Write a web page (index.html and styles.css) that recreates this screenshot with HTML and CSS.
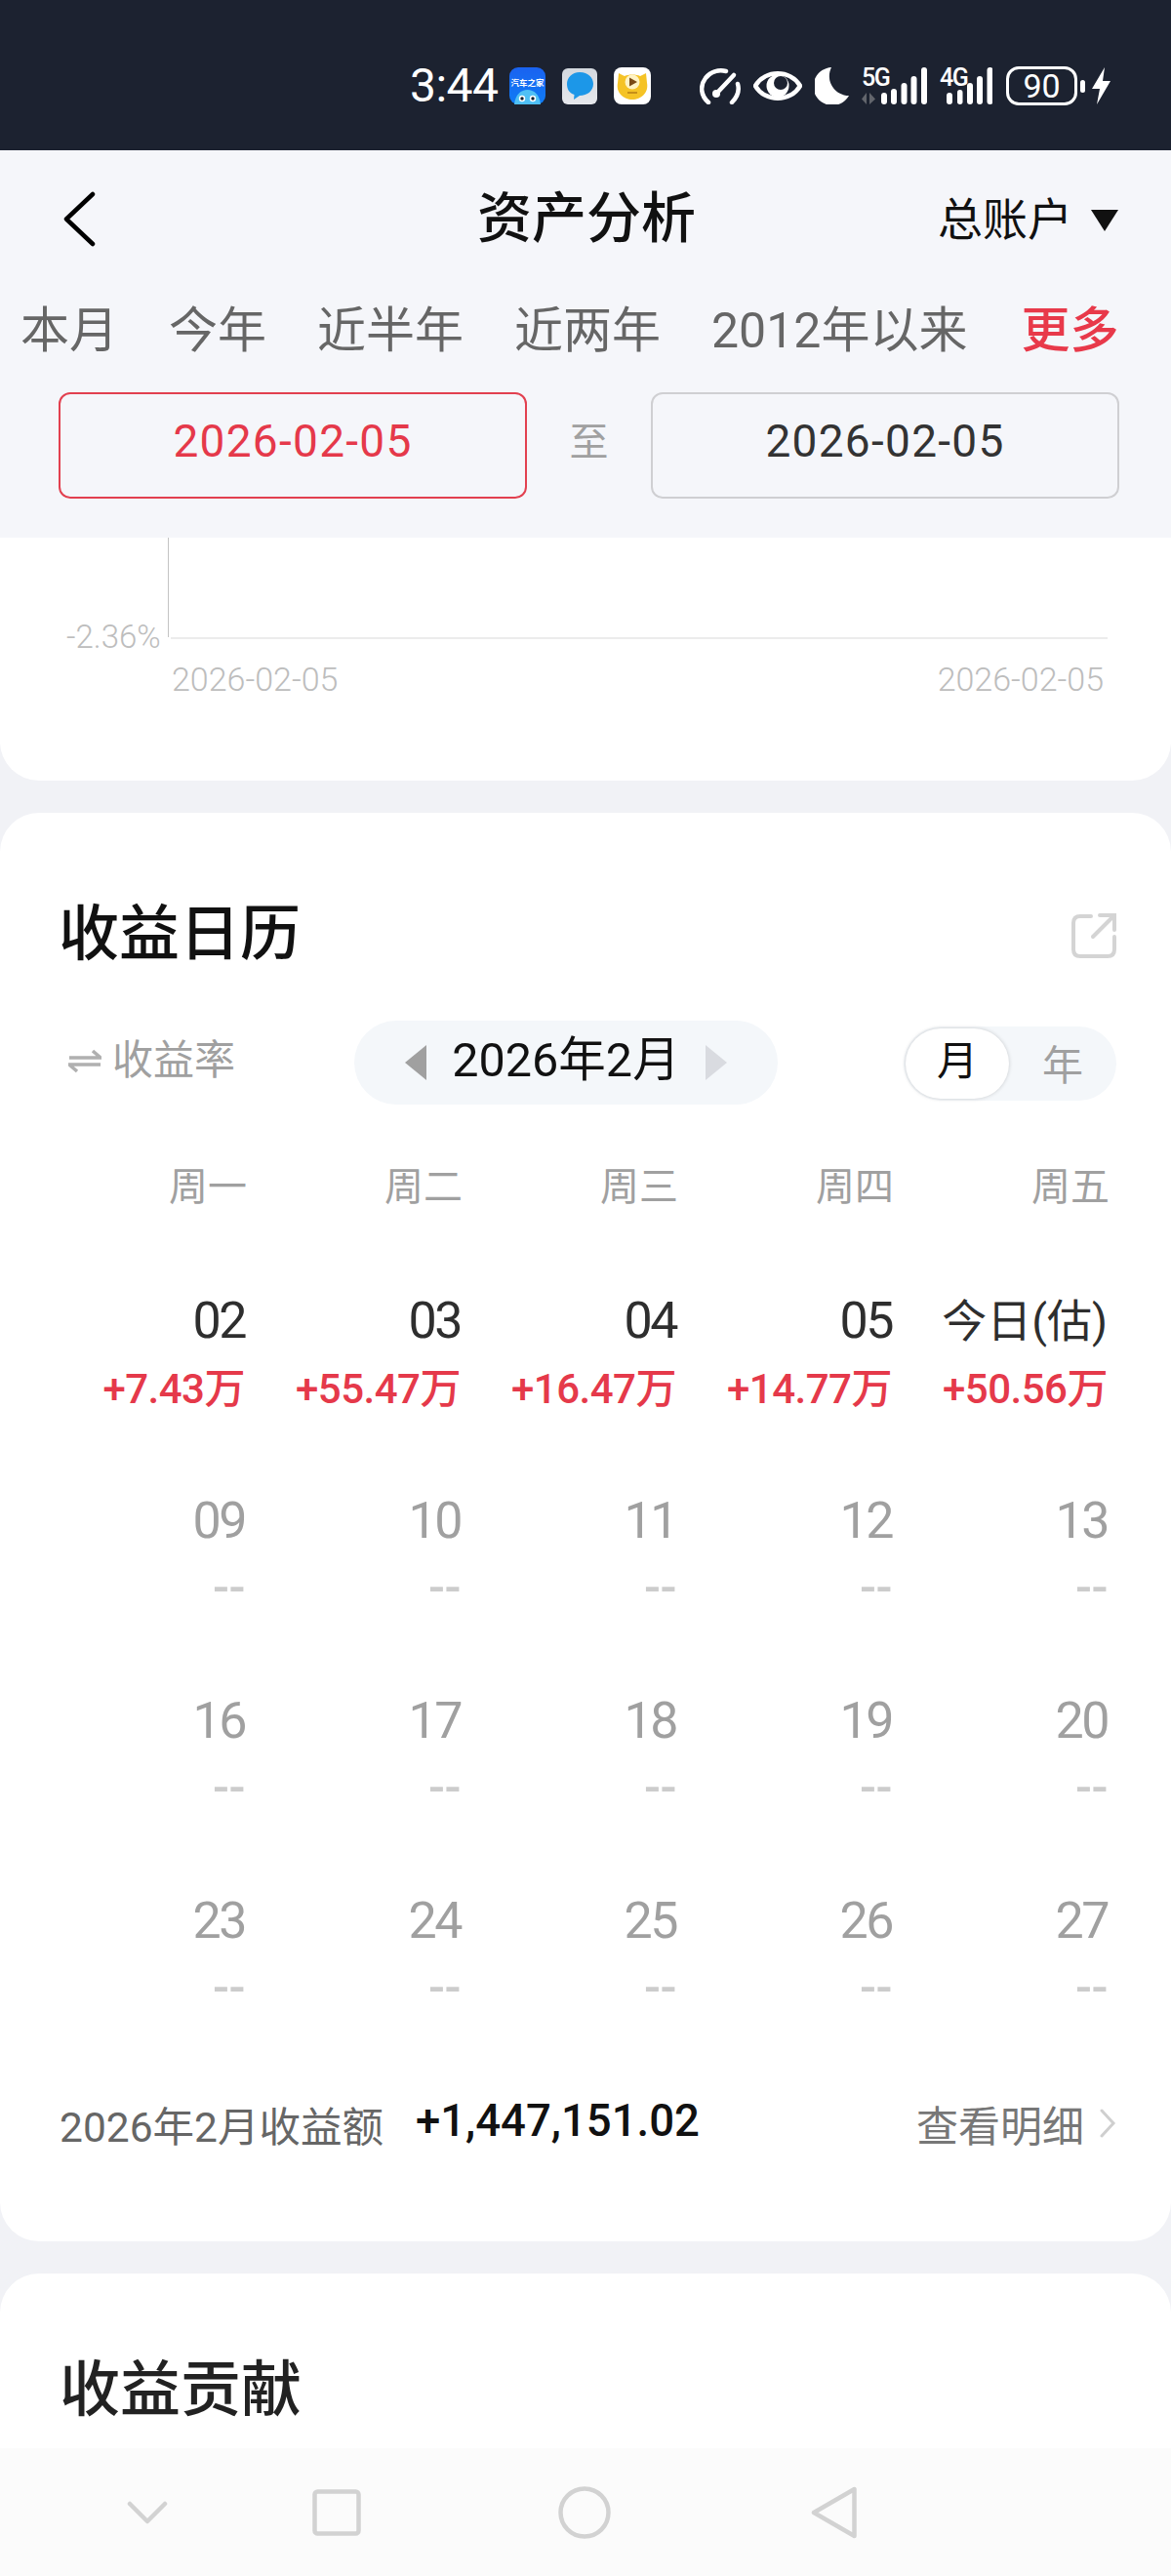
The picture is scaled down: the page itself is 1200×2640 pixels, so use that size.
FILE: index.html
```html
<!DOCTYPE html>
<html lang="zh-CN">
<head>
<meta charset="utf-8">
<title>资产分析</title>
<link rel="stylesheet" href="styles.css">
</head>
<body>
<div class="phone">
  <div class="statusbar">
    <span class="time">3:44</span>
    <div class="apps">
      <svg class="app" width="37" height="38" viewBox="0 0 37 38">
        <defs><linearGradient id="ah" x1="0" y1="0" x2="0" y2="1"><stop offset="0" stop-color="#1a62f0"/><stop offset="1" stop-color="#0f7cf5"/></linearGradient></defs>
        <rect width="37" height="38" rx="9" fill="url(#ah)"/>
        <text class="app-label" x="18.5" y="19" text-anchor="middle">汽车之家</text>
        <path d="M5 38 C6 28 12 23 18.500 23 C25 23 31 28 32 38Z" fill="#4fc0f5"/>
        <circle cx="13" cy="32" r="3.200" fill="#fff"/><circle cx="24" cy="32" r="3.200" fill="#fff"/>
        <circle cx="13" cy="32" r="1.700" fill="#123"/><circle cx="24" cy="32" r="1.700" fill="#123"/>
      </svg>
      <svg class="app" width="36" height="37" viewBox="0 0 36 37">
        <defs><linearGradient id="mg" x1="0" y1="0" x2="0" y2="1"><stop offset="0" stop-color="#d3d8de"/><stop offset="1" stop-color="#e6e8ec"/></linearGradient></defs>
        <rect width="36" height="37" rx="6" fill="url(#mg)"/>
        <path d="M18 4 C27 4 32 10 32 16 C32 23 26 28 18 28 L12 32 L12.500 27 C7 25 5 21 5 16 C5 10 10 4 18 4Z" fill="#1c97e8"/>
      </svg>
      <svg class="app" width="38" height="38" viewBox="0 0 38 38">
        <rect width="38" height="38" rx="8" fill="#fff"/>
        <path d="M5 6 L11 9 C15 7 23 7 27 9 L33 6 L34 16 C36 26 28 33 19 33 C10 33 2 26 4 16Z" fill="#f5c326"/>
        <circle cx="19" cy="15" r="7.500" fill="#fff3c4"/>
        <path d="M16 10.500 L24 15 L16 19.500Z" fill="#7a4a16"/>
        <path d="M14 26 L24 26" stroke="#b57e14" stroke-width="1.500"/>
      </svg>
    </div>
    <div class="sys">
      <svg width="42" height="38" viewBox="0 0 42 38" class="ic-stroke">
        <path d="M9 36 C1 29 0 19 6 11 C11 5 19 2 27 4"/>
        <path d="M39 17 C41 24 39 30 33 36"/>
        <path d="M18 26 L35 8"/>
        <circle class="ic-fill" cx="17" cy="27" r="4"/>
      </svg>
      <svg width="50" height="32" viewBox="0 0 50 32">
        <path class="ic-stroke" d="M2 16 C12 -1 38 -1 48 16 C38 33 12 33 2 16Z"/>
        <circle class="ic-fill" cx="25" cy="16" r="11.500"/>
        <circle cx="28" cy="13" r="7" fill="#1c2230"/>
      </svg>
      <svg width="35" height="38" viewBox="0 0 35 38">
        <path class="ic-fill" d="M17 0 A19.500 19.500 0 1 0 35 29 A20 20 0 0 1 17 0Z"/>
      </svg>
      <svg class="netgroup" width="67" height="50" viewBox="0 -12 67 50">
        <text class="net" x="0" y="18.500">5G</text>
        <path d="M5 26 L5 38 L0 32.500Z M8 26 L8 38 L14 32.500Z" fill="#62656c"/>
        <rect class="ic-fill" x="20" y="26" width="6" height="12" rx="3"/>
        <rect class="ic-fill" x="30" y="22" width="6" height="16" rx="3"/>
        <rect class="ic-fill" x="40.500" y="16" width="6" height="22" rx="3"/>
        <rect class="ic-fill" x="50.500" y="9" width="6" height="29" rx="3"/>
        <rect class="ic-fill" x="61" y="0" width="6" height="38" rx="3"/>
      </svg>
      <svg class="netgroup" width="54" height="50" viewBox="0 -12 54 50">
        <text class="net" x="0" y="18.500">4G</text>
        <rect class="ic-fill" x="7" y="26" width="6" height="12" rx="3"/>
        <rect class="ic-fill" x="18" y="23" width="5.500" height="15" rx="2.700"/>
        <rect class="ic-fill" x="28" y="16" width="6" height="22" rx="3"/>
        <rect class="ic-fill" x="38" y="9" width="6" height="29" rx="3"/>
        <rect class="ic-fill" x="48.500" y="0" width="6" height="38" rx="3"/>
      </svg>
      <div class="battery">
        <span class="battery-body">90</span>
        <span class="battery-tip"></span>
      </div>
      <svg class="bolt" width="19" height="38" viewBox="0 0 19 38">
        <path class="ic-fill" d="M13 0 L0 22 L8 22 L5 38 L19 14 L11 14Z"/>
      </svg>
    </div>
  </div>

  <header class="head">
    <div class="topbar">
      <svg class="back" width="34" height="57" viewBox="0 0 34 57"><path d="M30 3 L3 28.500 L30 54"/></svg>
      <h1 class="title">资产分析</h1>
      <div class="account"><span>总账户</span><i class="caret"></i></div>
    </div>
    <div class="tabs">
      <span class="tab">本月</span><span class="tab">今年</span><span class="tab">近半年</span><span class="tab">近两年</span><span class="tab">2012年以来</span><span class="tab tab-more">更多</span>
    </div>
    <div class="dates">
      <div class="datebox datebox-on">2026-02-05</div>
      <span class="to">至</span>
      <div class="datebox">2026-02-05</div>
    </div>
  </header>

  <main class="scroll">
    <section class="card card-chart">
      <div class="plot">
        <span class="ylabel">-2.36%</span>
        <span class="yaxis"></span>
        <span class="xaxis"></span>
      </div>
      <div class="xlabels"><span>2026-02-05</span><span>2026-02-05</span></div>
    </section>

    <section class="card card-cal">
      <div class="cal-title">
        <h2 class="h2">收益日历</h2>
        <svg class="share" width="46" height="46" viewBox="0 0 46 46"><path d="M20 3 L9 3 Q2 3 2 10 L2 37 Q2 44 9 44 L37 44 Q44 44 44 37 L44 24"/><path d="M22 24 L43 3"/><path d="M29 2 L44 2 L44 17"/></svg>
      </div>
      <div class="cal-controls">
        <div class="metric">
          <svg width="34" height="26" viewBox="0 0 34 26"><path d="M1 10 L33 10 L25 3"/><path d="M33 17 L1 17 L9 24"/></svg>
          <span>收益率</span>
        </div>
        <div class="month">
          <i class="tri tri-l"></i>
          <span class="month-text">2026年2月</span>
          <i class="tri tri-r"></i>
        </div>
        <div class="seg">
          <span class="seg-on">月</span>
          <span class="seg-off">年</span>
        </div>
      </div>
      <div class="cal-grid cal-week">
        <span>周一</span><span>周二</span><span>周三</span><span>周四</span><span>周五</span>
      </div>
      <div class="cal-grid cal-days">
        <div class="day"><b>02</b><em>+7.43万</em></div>
        <div class="day"><b>03</b><em>+55.47万</em></div>
        <div class="day"><b>04</b><em>+16.47万</em></div>
        <div class="day"><b>05</b><em>+14.77万</em></div>
        <div class="day"><b class="today">今日(估)</b><em>+50.56万</em></div>

        <div class="day off"><b>09</b><em>--</em></div>
        <div class="day off"><b>10</b><em>--</em></div>
        <div class="day off"><b>11</b><em>--</em></div>
        <div class="day off"><b>12</b><em>--</em></div>
        <div class="day off"><b>13</b><em>--</em></div>

        <div class="day off"><b>16</b><em>--</em></div>
        <div class="day off"><b>17</b><em>--</em></div>
        <div class="day off"><b>18</b><em>--</em></div>
        <div class="day off"><b>19</b><em>--</em></div>
        <div class="day off"><b>20</b><em>--</em></div>

        <div class="day off"><b>23</b><em>--</em></div>
        <div class="day off"><b>24</b><em>--</em></div>
        <div class="day off"><b>25</b><em>--</em></div>
        <div class="day off"><b>26</b><em>--</em></div>
        <div class="day off"><b>27</b><em>--</em></div>
      </div>
      <div class="cal-foot">
        <span class="foot-label">2026年2月收益额</span>
        <span class="foot-value">+1,447,151.02</span>
        <span class="foot-more">查看明细</span>
        <svg class="foot-chev" width="18" height="30" viewBox="0 0 18 30"><path d="M3 2 L15 15 L3 28"/></svg>
      </div>
    </section>

    <section class="card card-contrib">
      <h2 class="h2 h2-soft">收益贡献</h2>
    </section>
  </main>

  <nav class="navbar">
    <svg class="nav-chev" width="42" height="24" viewBox="0 0 42 24"><path d="M3 3 L21 21 L39 3"/></svg>
    <svg class="nav-sq" width="50" height="48" viewBox="0 0 50 48"><rect x="2.500" y="2.500" width="45" height="43" rx="3"/></svg>
    <svg class="nav-ci" width="54" height="54" viewBox="0 0 54 54"><circle cx="27" cy="27" r="24.500"/></svg>
    <svg class="nav-tr" width="47" height="54" viewBox="0 0 47 54"><path d="M44.500 3 L44.500 51 L3 27Z"/></svg>
  </nav>
</div>
</body>
</html>
```
FILE: styles.css
```css
* { box-sizing: border-box; }
html, body { margin: 0; padding: 0; }
body {
  background: #f1f2f6;
  font-family: Roboto, "Noto Sans CJK SC", sans-serif;
}
.phone {
  width: 1200px;
  height: 2640px;
  display: flex;
  flex-direction: column;
  overflow: hidden;
}

/* status bar */
.statusbar {
  height: 154px;
  flex: none;
  background: #1c2230;
  display: flex;
  align-items: center;
  justify-content: flex-end;
  padding: 22px 62px 0 0;
  color: #fff;
}
.time { font-size: 48px; line-height: 50px; width: 90px; letter-spacing: -.5px; white-space: nowrap; }
.apps { display: flex; align-items: center; gap: 17px; margin-left: 12px; }
.app-label { font-size: 8.500px; font-weight: 700; fill: #fff; }
.sys { display: flex; align-items: center; gap: 13px; margin-left: 50px; }
.netgroup { margin-top: -12px; }
.ic-fill { fill: #fff; stroke: none; }
.ic-stroke { fill: none; stroke: #fff; stroke-width: 4.500px; stroke-linecap: round; }
.net { font-size: 25px; font-weight: 500; fill: #fff; letter-spacing: -1.500px; }
.battery { display: flex; align-items: center; gap: 3px; width: 81px; margin-left: 1px; }
.battery-body {
  width: 73px;
  height: 40px;
  border: 3px solid #fff;
  border-radius: 13px;
  font-size: 34px;
  line-height: 34px;
  text-align: center;
  color: #fff;
}
.battery-tip { width: 5px; height: 13px; border-radius: 3px; background: #fff; }
.bolt { margin-left: -6px; }

/* header */
.head { flex: none; background: #f5f6fa; height: 397px; }
.topbar {
  height: 140px;
  display: grid;
  grid-template-columns: 1fr auto 1fr;
  align-items: center;
  padding: 0 52px 0 54px;
}
.back { margin-left: 11px; fill: none; stroke: #000; stroke-width: 4.500px; stroke-linecap: round; stroke-linejoin: round; }
.title { margin: 0; font-size: 56px; line-height: 70px; font-weight: 500; color: #111; }
.account {
  justify-self: end;
  display: flex;
  align-items: center;
  gap: 19px;
  margin-right: 2px;
  font-size: 46px;
  line-height: 60px;
  color: #111;
}
.account span { margin-top: 2px; }
.caret {
  width: 0; height: 0;
  border-left: 14px solid transparent;
  border-right: 14px solid transparent;
  border-top: 22px solid #111;
  margin-top: 4px;
}
.tabs {
  margin-top: 10px;
  display: flex;
  gap: 52px;
  padding-left: 21px;
  font-size: 50px;
  line-height: 70px;
  color: #666;
  white-space: nowrap;
}
.tab-more { margin-left: 3px; color: #e8394a; font-weight: 500; }
.dates {
  margin-top: 28px;
  display: flex;
  align-items: center;
  padding: 0 53px 0 60px;
}
.datebox {
  width: 480px;
  height: 109px;
  border: 2px solid #cfcfd2;
  border-radius: 12px;
  padding-bottom: 10px;
  display: flex;
  align-items: center;
  justify-content: center;
  font-size: 46px;
  letter-spacing: 1.300px;
  color: #333;
}
.datebox-on { border-color: #e2404f; color: #e5394a; }
.to { flex: 1; text-align: center; font-size: 40px; line-height: 50px; color: #a0a0a0; margin-bottom: 6px; }

/* content */
.scroll { flex: 1; min-height: 0; overflow: hidden; display: flex; flex-direction: column; gap: 33px; }
.card { background: #fff; border-radius: 40px; flex: none; }
.card-chart { height: 249px; border-radius: 0 0 40px 40px; padding: 0 65px 0 68px; }
.plot { height: 104px; display: flex; align-items: flex-end; }
.ylabel { width: 104px; font-size: 33px; line-height: 36px; font-weight: 300; color: #bdbdbd; margin-bottom: -16px; white-space: nowrap; }
.yaxis { width: 1px; height: 102px; background: #c4c4c4; margin-bottom: 2px; }
.xaxis { flex: 1; height: 2px; background: #ececec; margin-left: 2px; }
.xlabels {
  margin: 21px 4px 0 108px;
  display: flex;
  justify-content: space-between;
  font-size: 34px;
  line-height: 40px;
  font-weight: 300;
  color: #bdbdbd;
}

.card-cal { height: 1464px; padding: 85px 56px 0 61px; }
.cal-title { display: flex; justify-content: space-between; align-items: center; height: 80px; }
.h2 { margin: 0 0 0 -1px; font-size: 62px; line-height: 80px; font-weight: 500; color: #111; }
.h2-soft { color: #222; }
.share { fill: none; stroke: #d4d4d4; stroke-width: 4px; stroke-linecap: round; margin-top: 2px; }

.cal-controls {
  margin-top: 48px;
  height: 86px;
  display: flex;
  align-items: center;
}
.metric { width: 302px; display: flex; align-items: center; gap: 11px; padding-left: 9px; font-size: 42px; color: #a0a0a0; white-space: nowrap; }
.metric span { margin-bottom: 14px; }
.metric svg { margin-bottom: 4px; fill: none; stroke: #b0b0b0; stroke-width: 3.500px; }
.month {
  width: 434px;
  height: 86px;
  border-radius: 43px;
  background: #f4f7fa;
  display: flex;
  align-items: center;
  justify-content: center;
  gap: 26px;
  font-size: 48.500px;
  color: #111;
}
.month-text { white-space: nowrap; margin-bottom: 14px; }
.tri { width: 0; height: 0; border-top: 18px solid transparent; border-bottom: 18px solid transparent; }
.tri-l { border-right: 22px solid #a0a0a0; }
.tri-r { border-left: 22px solid #d9dbe0; }
.seg {
  margin-left: 129px;
  margin-top: 2px;
  width: 218px;
  height: 76px;
  border-radius: 38px;
  background: #f4f7fa;
  display: flex;
  align-items: center;
  font-size: 42px;
}
.seg-on {
  width: 106px;
  height: 72px;
  margin-left: 2px;
  border-radius: 36px;
  background: #fff;
  box-shadow: 0 0 4px rgba(0, 0, 0, .18);
  color: #111;
  line-height: 68px;
  text-align: center;
}
.seg-off { flex: 1; text-align: center; color: #a0a0a0; margin-bottom: 4px; }

.cal-grid {
  display: grid;
  grid-template-columns: repeat(5, 221px);
  margin-left: -29px;
  text-align: right;
}
.cal-week { margin-top: 55px; font-size: 40px; line-height: 60px; color: #a0a0a0; }
.cal-days { margin-top: 72px; grid-auto-rows: 140px; row-gap: 65px; }
.day { padding-right: 2px; }
.day b { display: block; font-size: 52px; line-height: 70px; font-weight: 400; letter-spacing: -2.500px; color: #2e2e2e; white-space: nowrap; }
.day b.today { font-size: 46px; letter-spacing: 0; }
.day em { display: block; font-style: normal; font-size: 42px; line-height: 70px; font-weight: 500; color: #e5394a; white-space: nowrap; letter-spacing: -.500px; }
.day.off b { color: #a0a0a0; }
.day.off em { color: #cccccc; font-size: 50px; margin-top: -2px; }

.cal-foot { margin-top: 72px; height: 60px; display: flex; align-items: center; white-space: nowrap; }
.foot-label { font-size: 42.500px; color: #666; }
.foot-value { margin-left: 33px; font-size: 45.500px; font-weight: 500; color: #111; margin-top: -6px; }
.foot-more { margin-left: auto; font-size: 43px; color: #777; }
.foot-chev { margin-left: 15px; fill: none; stroke: #cfcfcf; stroke-width: 3px; stroke-linecap: round; }

.card-contrib { height: 400px; padding: 80px 62px 0; }

/* nav */
.navbar {
  flex: none;
  height: 131px;
  background: #fbfbfb;
  display: flex;
  align-items: center;
  padding: 0 0 0 130px;
}
.navbar svg { fill: none; stroke: #d2d2d2; stroke-width: 4.500px; stroke-linecap: round; stroke-linejoin: round; }
.nav-sq { margin-left: 148px; }
.nav-ci { margin-left: 202px; }
.nav-tr { margin-left: 205px; }
```
